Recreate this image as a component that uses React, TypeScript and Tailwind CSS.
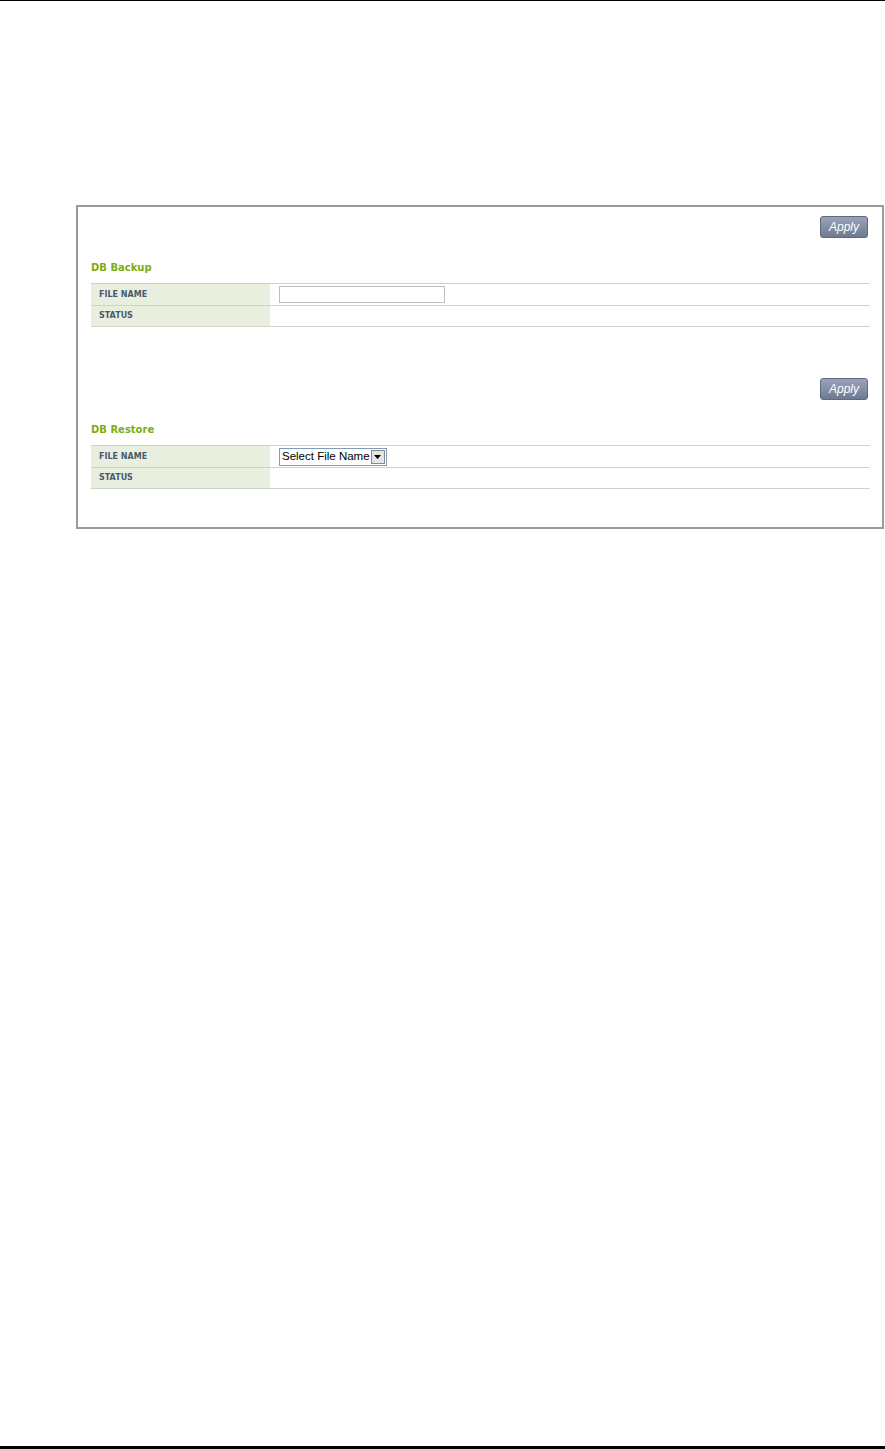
const ApplyButton = () => (
  <div className="flex justify-end pr-[2px]">
    <button className="w-[48px] h-[22px] rounded-[3px] border border-[#5f6a80] bg-gradient-to-b from-[#9aa3b8] to-[#6f7a92] text-white italic text-[12px] font-['Liberation_Sans',Arial,sans-serif] leading-none">
      Apply
    </button>
  </div>
);

type RowProps = { label: string; tall?: boolean; children?: React.ReactNode };

const Row = ({ label, tall, children }: RowProps) => (
  <div className={`flex border-b border-[#cfd4c6] ${tall ? "h-[22px]" : "h-[21px]"}`}>
    <div className="w-[179px] bg-[#e8efde] flex items-center pl-[8px] text-[8px] font-bold text-[#4b5870] font-['DejaVu_Sans',Verdana,sans-serif]">
      {label}
    </div>
    <div className="flex-1 flex items-center pl-[9px]">{children}</div>
  </div>
);

const Section = ({ title, children }: { title: string; children: React.ReactNode }) => (
  <div>
    <ApplyButton />
    <div className="mt-[22px] h-[23px] text-[10px] font-bold text-[#7aac14] font-['DejaVu_Sans',Verdana,sans-serif]">
      {title}
    </div>
    <div className="border-t border-[#cfd4c6]">{children}</div>
  </div>
);

export default function App() {
  return (
    <div className="min-h-[1449px] bg-white flex flex-col border-t border-black">
      <div className="flex-1 pt-[204px] pl-[76px]">
        <div className="w-[808px] h-[324px] border-2 border-[#9a9a9a] pl-[13px] pr-[12px] pt-[9px]">
          <Section title="DB Backup">
            <Row label="FILE NAME" tall>
              <input
                type="text"
                className="w-[166px] h-[17px] border border-[#bdbdbd] bg-white outline-none"
              />
            </Row>
            <Row label="STATUS" />
          </Section>
          <div className="h-[51px]" />
          <Section title="DB Restore">
            <Row label="FILE NAME" tall>
              <div className="flex items-center h-[18px] border border-[#7f9db9] bg-white">
                <span className="pl-[2px] pr-[1px] text-[11.5px] text-black font-['Liberation_Sans',Arial,sans-serif] leading-none">
                  Select File Name
                </span>
                <span className="w-[14px] h-[14px] mr-[1px] border border-[#8a8a8a] bg-[#e4e4e4] flex items-center justify-center">
                  <svg width="7" height="4" viewBox="0 0 7 4">
                    <path d="M0 0h7L3.5 4z" fill="#000" />
                  </svg>
                </span>
              </div>
            </Row>
            <Row label="STATUS" />
          </Section>
        </div>
      </div>
      <div className="h-[3px] bg-black" />
    </div>
  );
}
